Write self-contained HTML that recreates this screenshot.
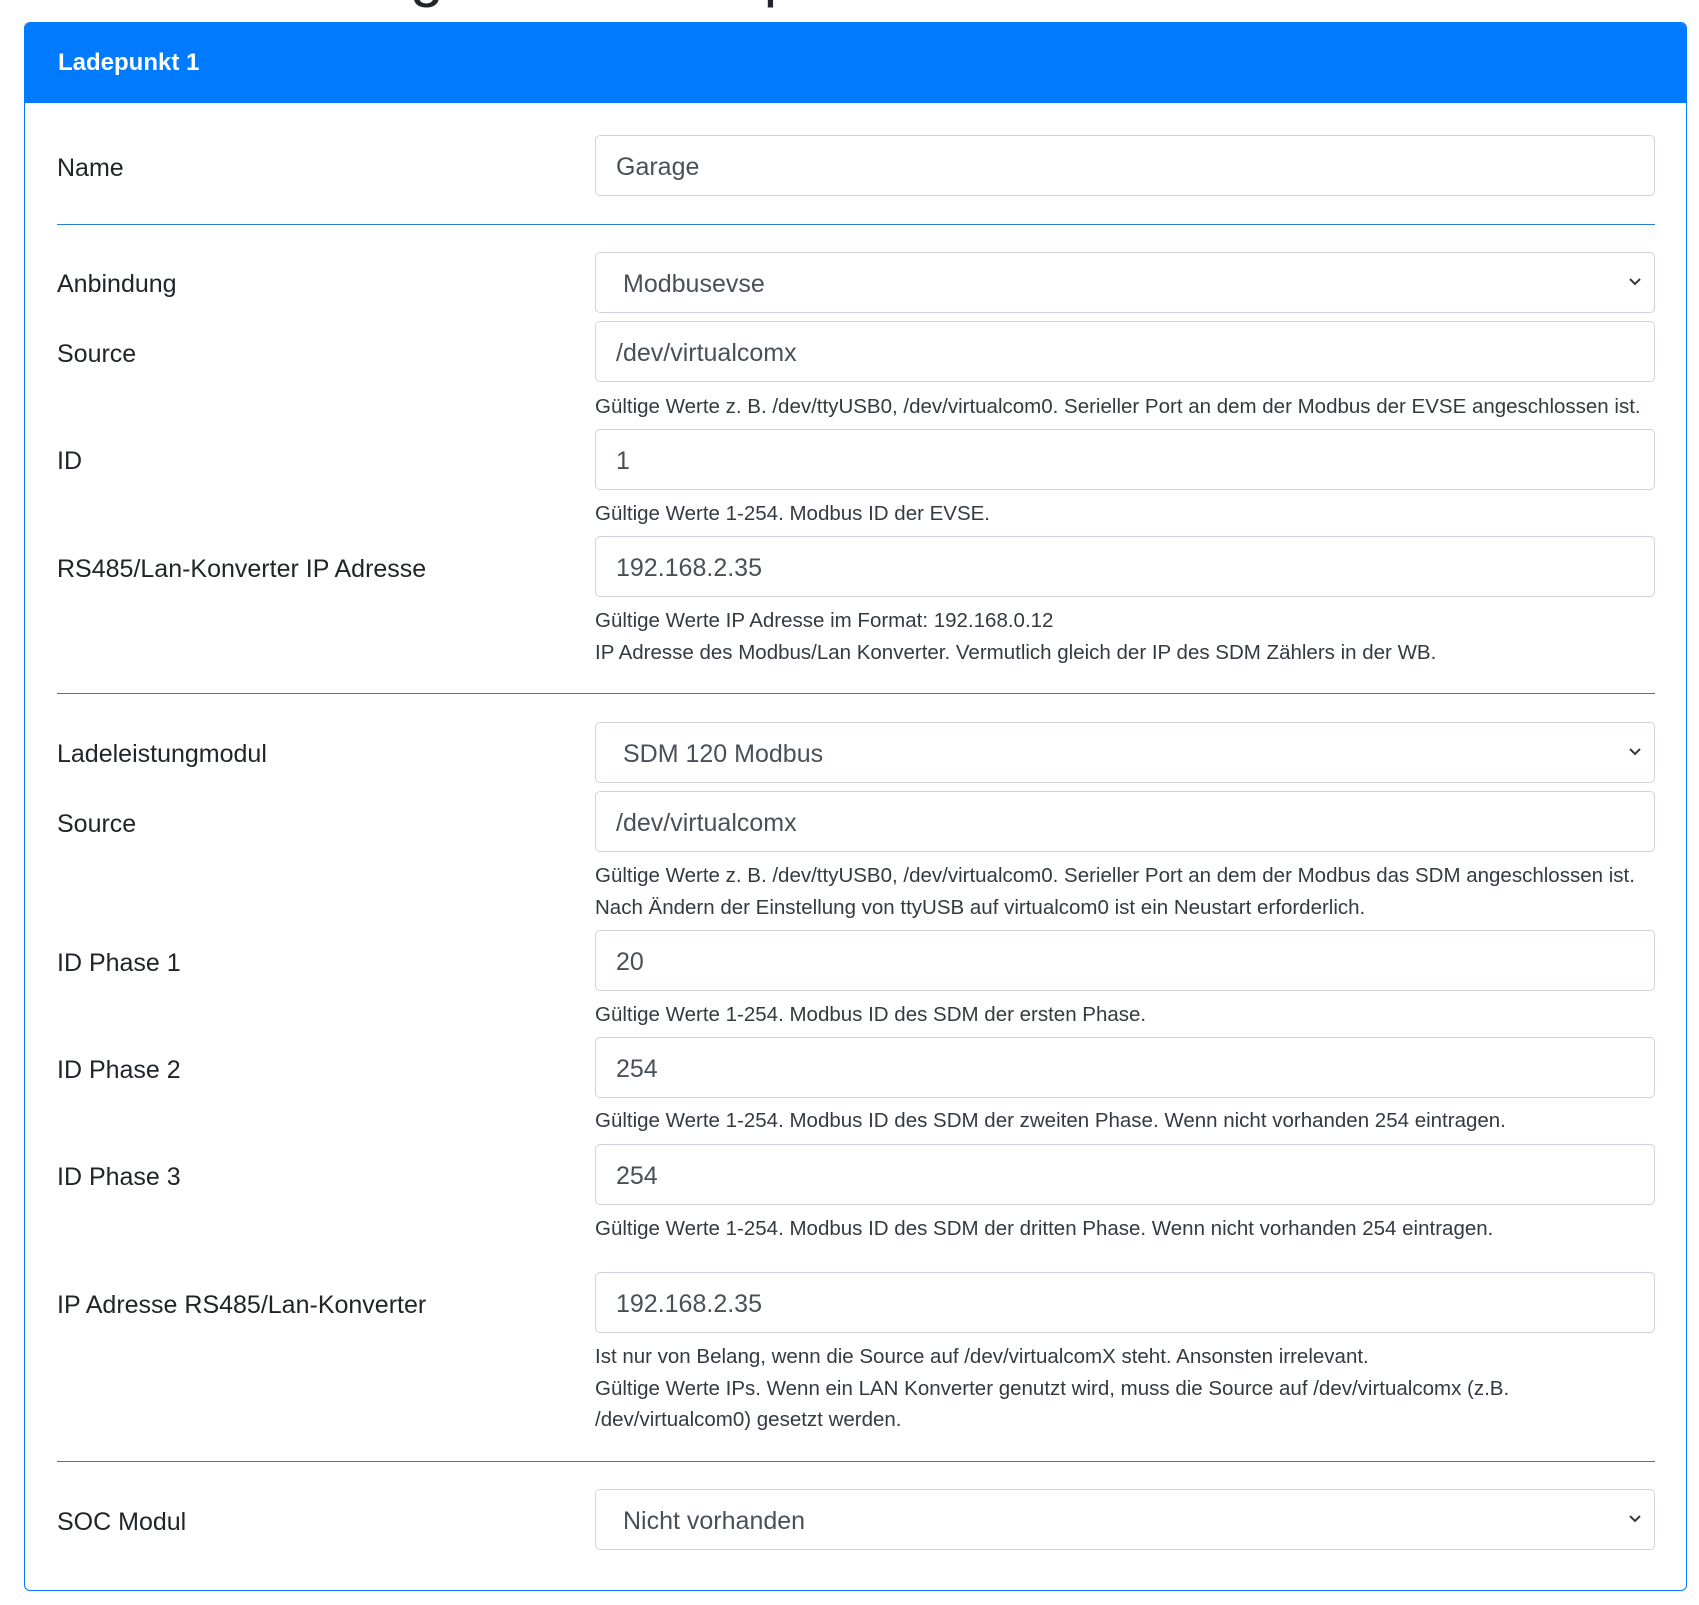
<!DOCTYPE html>
<html><head><meta charset="utf-8"><style>
body{margin:0;width:1699px;height:1605px;background:#fff;position:relative;overflow:hidden;font-family:"Liberation Sans",sans-serif;color:#212529}
.t{position:absolute;left:150px;top:-60px;font-size:60px;color:#212529;white-space:nowrap}
.card{position:absolute;left:24px;top:22px;width:1661px;height:1567px;border:1px solid #007bff;border-radius:6px;overflow:hidden}
.hd{position:absolute;left:0;top:0;right:0;height:80px;background:#007bff;color:#fff;font-weight:bold;font-size:24px;line-height:80px;padding-left:33px}
.l{position:absolute;left:57px;font-size:25px;white-space:nowrap;margin-top:1px}
.i{position:absolute;left:595px;height:61px;border:1px solid #ced4da;border-radius:5px;box-sizing:border-box;width:1060px;font-size:25px;color:#495057;line-height:62px;padding-left:20px;white-space:nowrap}
.s{padding-left:27px}
.s svg{position:absolute;right:12px;top:24px}
.h{position:absolute;left:595px;font-size:20.5px;line-height:31.5px;color:#343a40;white-space:nowrap}
.hr{position:absolute;left:57px;width:1598px;height:1px;background:#2a7fd4}
</style></head><body>
<div class="t">Einstellungen der Ladepunkte</div>
<div class="card"><div class="hd">Ladepunkt 1</div></div>
<div class="l" style="top:153px">Name</div>
<div class="i" style="top:135px">Garage</div>
<div class="hr" style="top:224px"></div>
<div class="l" style="top:269px">Anbindung</div>
<div class="i s" style="top:252px">Modbusevse<svg width="14" height="10" viewBox="0 0 14 10"><path d="M2 2l5 5 5-5" fill="none" stroke="#343a40" stroke-width="2"/></svg></div>
<div class="l" style="top:339px">Source</div>
<div class="i" style="top:321px">/dev/virtualcomx</div>
<div class="h" style="top:391px">Gültige Werte z. B. /dev/ttyUSB0, /dev/virtualcom0. Serieller Port an dem der Modbus der EVSE angeschlossen ist.</div>
<div class="l" style="top:446px">ID</div>
<div class="i" style="top:429px">1</div>
<div class="h" style="top:498px">Gültige Werte 1-254. Modbus ID der EVSE.</div>
<div class="l" style="top:554px">RS485/Lan-Konverter IP Adresse</div>
<div class="i" style="top:536px">192.168.2.35</div>
<div class="h" style="top:605px">Gültige Werte IP Adresse im Format: 192.168.0.12<br>IP Adresse des Modbus/Lan Konverter. Vermutlich gleich der IP des SDM Zählers in der WB.</div>
<div class="hr" style="top:693px"></div>
<div class="l" style="top:739px">Ladeleistungmodul</div>
<div class="i s" style="top:722px">SDM 120 Modbus<svg width="14" height="10" viewBox="0 0 14 10"><path d="M2 2l5 5 5-5" fill="none" stroke="#343a40" stroke-width="2"/></svg></div>
<div class="l" style="top:809px">Source</div>
<div class="i" style="top:791px">/dev/virtualcomx</div>
<div class="h" style="top:860px">Gültige Werte z. B. /dev/ttyUSB0, /dev/virtualcom0. Serieller Port an dem der Modbus das SDM angeschlossen ist.<br>Nach Ändern der Einstellung von ttyUSB auf virtualcom0 ist ein Neustart erforderlich.</div>
<div class="l" style="top:948px">ID Phase 1</div>
<div class="i" style="top:930px">20</div>
<div class="h" style="top:999px">Gültige Werte 1-254. Modbus ID des SDM der ersten Phase.</div>
<div class="l" style="top:1055px">ID Phase 2</div>
<div class="i" style="top:1037px">254</div>
<div class="h" style="top:1105px">Gültige Werte 1-254. Modbus ID des SDM der zweiten Phase. Wenn nicht vorhanden 254 eintragen.</div>
<div class="l" style="top:1162px">ID Phase 3</div>
<div class="i" style="top:1144px">254</div>
<div class="h" style="top:1213px">Gültige Werte 1-254. Modbus ID des SDM der dritten Phase. Wenn nicht vorhanden 254 eintragen.</div>
<div class="l" style="top:1290px">IP Adresse RS485/Lan-Konverter</div>
<div class="i" style="top:1272px">192.168.2.35</div>
<div class="h" style="top:1341px">Ist nur von Belang, wenn die Source auf /dev/virtualcomX steht. Ansonsten irrelevant.<br>Gültige Werte IPs. Wenn ein LAN Konverter genutzt wird, muss die Source auf /dev/virtualcomx (z.B.<br>/dev/virtualcom0) gesetzt werden.</div>
<div class="hr" style="top:1461px"></div>
<div class="l" style="top:1507px">SOC Modul</div>
<div class="i s" style="top:1489px">Nicht vorhanden<svg width="14" height="10" viewBox="0 0 14 10"><path d="M2 2l5 5 5-5" fill="none" stroke="#343a40" stroke-width="2"/></svg></div>
</body></html>
